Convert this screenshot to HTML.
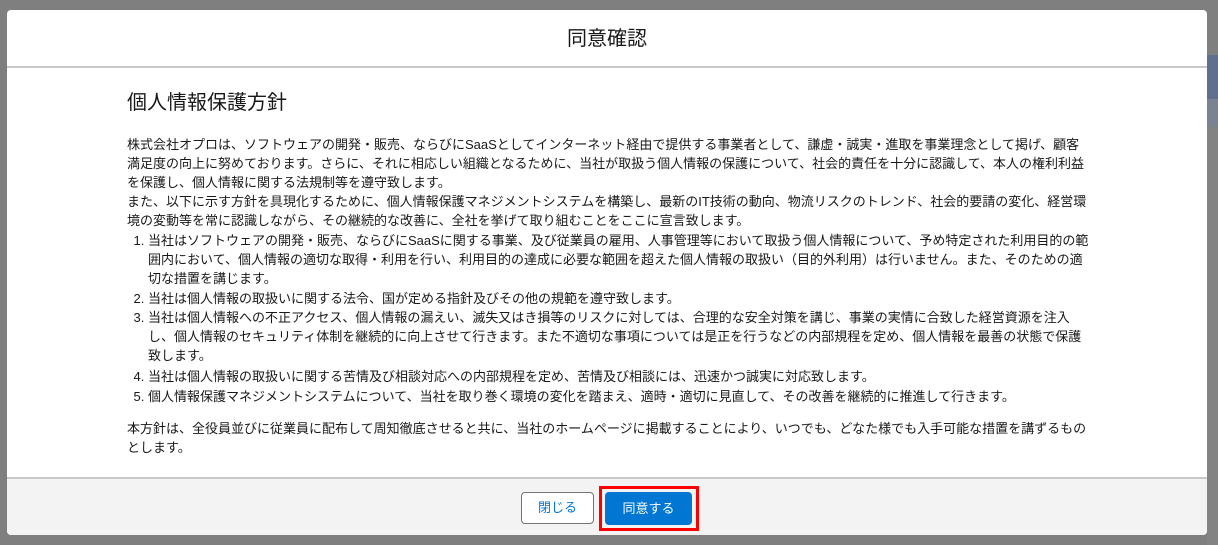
<!DOCTYPE html>
<html><head><meta charset="utf-8"><style>
*{box-sizing:border-box;margin:0;padding:0}
body{width:1218px;height:545px;background:#7f7f7f;font-family:"Liberation Sans","Noto Sans CJK JP",sans-serif;color:#181818;position:relative;overflow:hidden}
.bgR{position:absolute;left:1207px;top:55px;width:11px;height:490px;background:#838383}
.bgR2{position:absolute;left:1207px;top:55px;width:11px;height:44px;background:#5f6f8c}
.bgR3{position:absolute;left:1207px;top:99px;width:11px;height:28px;background:#7b8290}
.modal{position:absolute;left:7px;top:10px;width:1200px;height:525px;background:#fff;border-radius:4px;overflow:hidden}
.hd{height:58px;border-bottom:2px solid #c9c9c9;text-align:center;font-size:20px;line-height:58px}
.body{padding:22px 0 0 120px;font-size:13px;line-height:19px;white-space:nowrap}
h2{font-size:20px;font-weight:normal;line-height:26px;margin-bottom:19px}
ol{margin:1px 0 13px 0;padding-left:21px}
ol li:nth-child(2){margin-top:1px}
ol li:nth-child(4){margin-top:2px}
ol li:nth-child(5){margin-top:1px}
.ft{position:absolute;left:0;top:467px;width:1200px;height:58px;background:#f3f3f3;border-top:2px solid #c9c9c9}
.b1{position:absolute;left:514px;top:13px;width:73px;height:32px;border:1px solid #747474;border-radius:4px;background:#fff;color:#0176d3;font-size:13px;text-align:center;line-height:30px}
.red{position:absolute;left:592px;top:7px;width:100px;height:45px;border:3px solid #f00}
.b2{position:absolute;left:598px;top:13px;width:87px;height:33px;background:#0176d3;border-radius:4px;color:#fff;font-size:13px;text-align:center;line-height:33px}
</style></head><body>
<div class="bgR"></div><div class="bgR2"></div><div class="bgR3"></div>
<div class="modal">
<div class="hd">同意確認</div>
<div class="body">
<h2>個人情報保護方針</h2>
<p>株式会社オプロは、ソフトウェアの開発・販売、ならびにSaaSとしてインターネット経由で提供する事業者として、謙虚・誠実・進取を事業理念として掲げ、顧客<br>満足度の向上に努めております。さらに、それに相応しい組織となるために、当社が取扱う個人情報の保護について、社会的責任を十分に認識して、本人の権利利益<br>を保護し、個人情報に関する法規制等を遵守致します。<br>また、以下に示す方針を具現化するために、個人情報保護マネジメントシステムを構築し、最新のIT技術の動向、物流リスクのトレンド、社会的要請の変化、経営環<br>境の変動等を常に認識しながら、その継続的な改善に、全社を挙げて取り組むことをここに宣言致します。</p>
<ol>
<li>当社はソフトウェアの開発・販売、ならびにSaaSに関する事業、及び従業員の雇用、人事管理等において取扱う個人情報について、予め特定された利用目的の範<br>囲内において、個人情報の適切な取得・利用を行い、利用目的の達成に必要な範囲を超えた個人情報の取扱い（目的外利用）は行いません。また、そのための適<br>切な措置を講じます。</li>
<li>当社は個人情報の取扱いに関する法令、国が定める指針及びその他の規範を遵守致します。</li>
<li>当社は個人情報への不正アクセス、個人情報の漏えい、滅失又はき損等のリスクに対しては、合理的な安全対策を講じ、事業の実情に合致した経営資源を注入<br>し、個人情報のセキュリティ体制を継続的に向上させて行きます。また不適切な事項については是正を行うなどの内部規程を定め、個人情報を最善の状態で保護<br>致します。</li>
<li>当社は個人情報の取扱いに関する苦情及び相談対応への内部規程を定め、苦情及び相談には、迅速かつ誠実に対応致します。</li>
<li>個人情報保護マネジメントシステムについて、当社を取り巻く環境の変化を踏まえ、適時・適切に見直して、その改善を継続的に推進して行きます。</li>
</ol>
<p>本方針は、全役員並びに従業員に配布して周知徹底させると共に、当社のホームページに掲載することにより、いつでも、どなた様でも入手可能な措置を講ずるもの<br>とします。</p>
</div>
<div class="ft"><div class="b1">閉じる</div><div class="red"></div><div class="b2">同意する</div></div>
</div>
</body></html>
